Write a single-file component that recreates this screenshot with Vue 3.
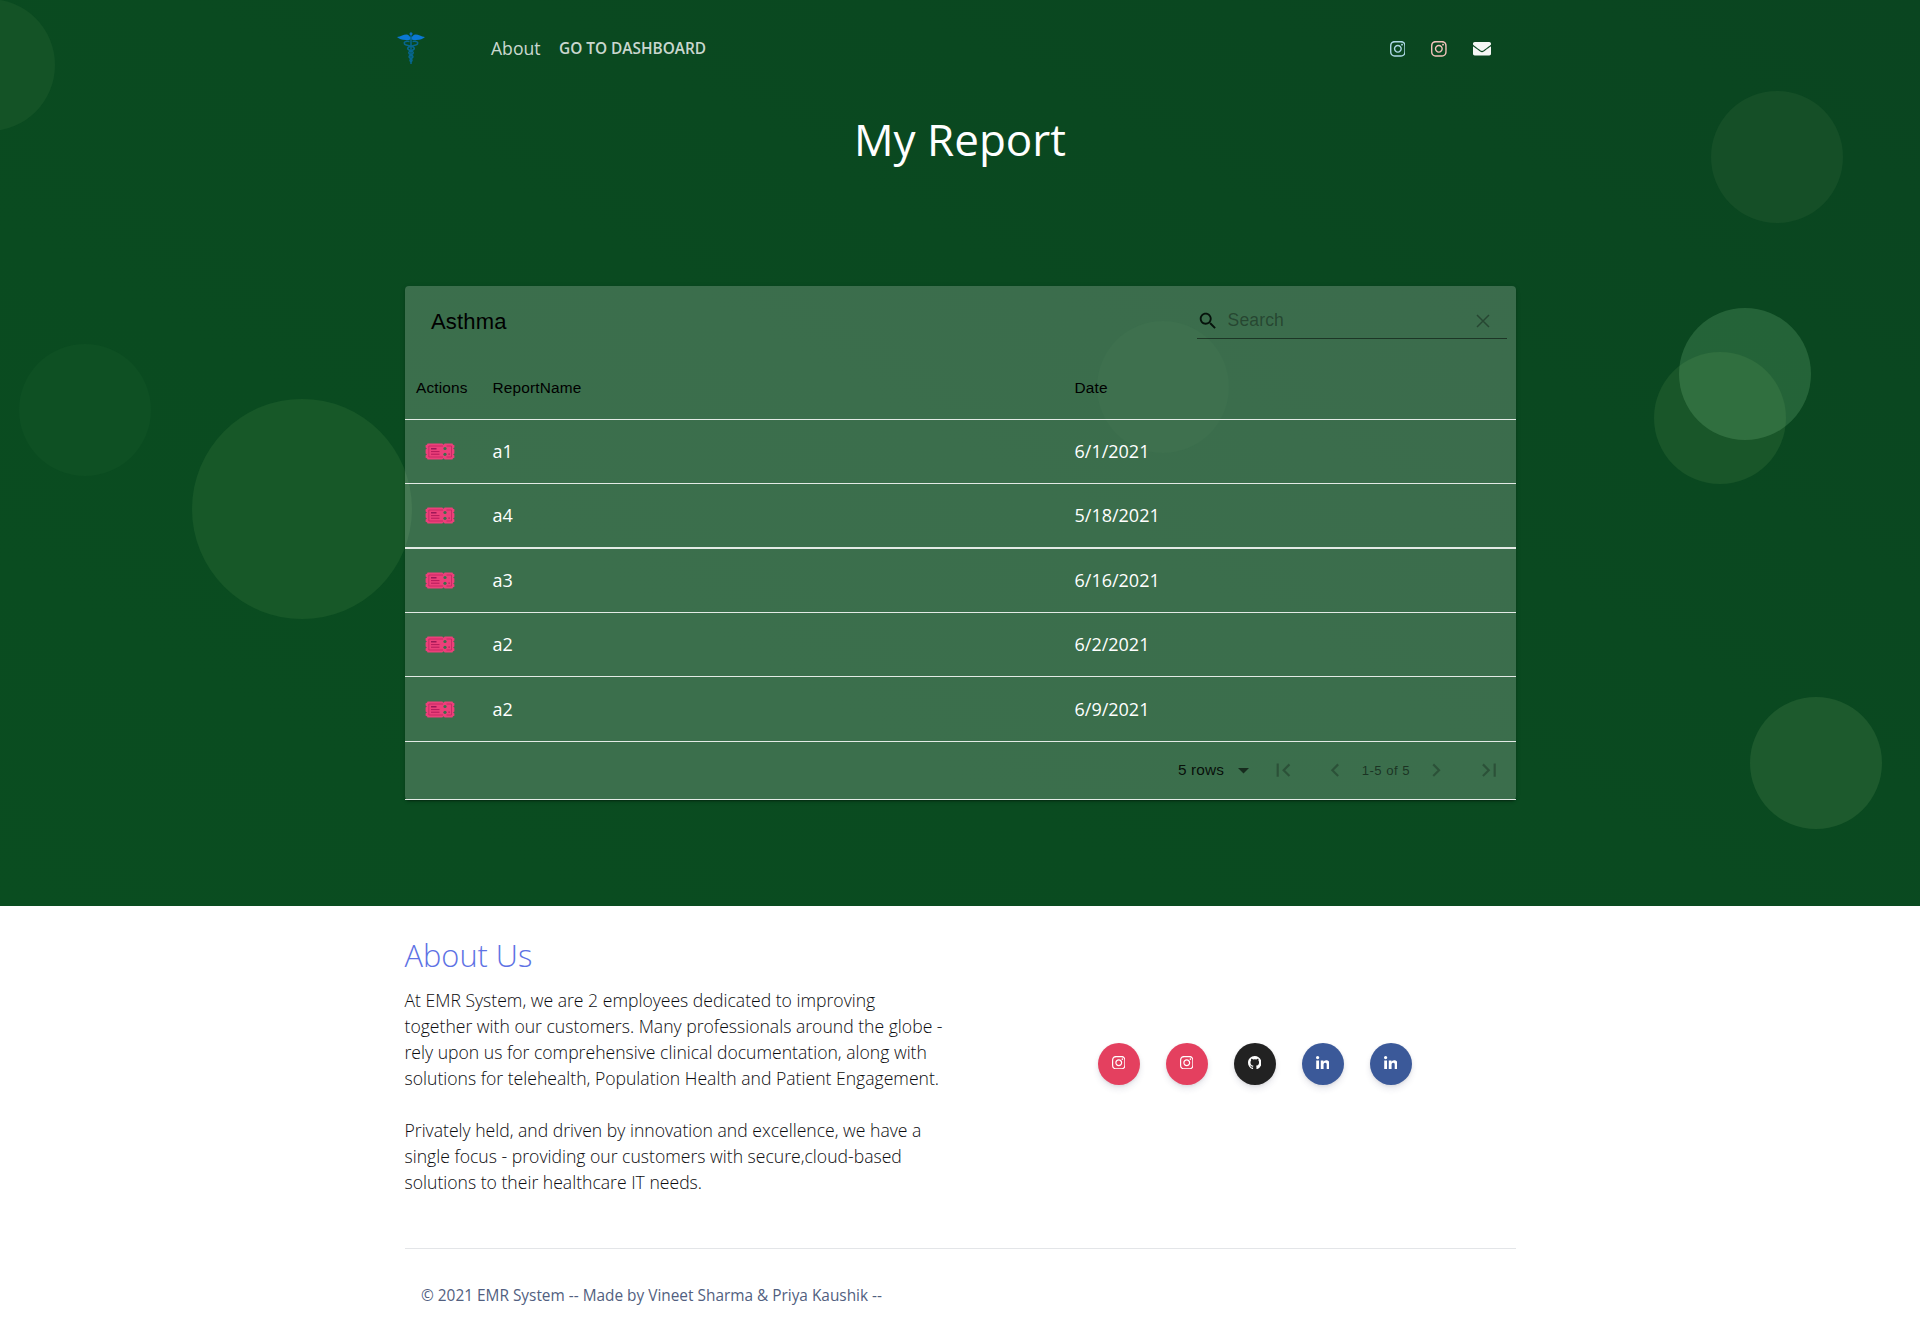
<script setup>
const paths = {
  instagram: 'M224.1 141c-63.6 0-114.9 51.3-114.9 114.9s51.3 114.9 114.9 114.9S339 319.5 339 255.900 287.700 141 224.100 141zm0 189.600c-41.100 0-74.700-33.500-74.700-74.700s33.500-74.700 74.700-74.700 74.700 33.500 74.700 74.700-33.600 74.700-74.700 74.700zm146.400-194.300c0 14.900-12 26.800-26.800 26.800-14.900 0-26.800-12-26.800-26.800s12-26.800 26.800-26.800 26.800 12 26.800 26.800zm76.100 27.200c-1.700-35.900-9.900-67.700-36.200-93.900-26.200-26.200-58-34.400-93.900-36.200-37-2.100-147.900-2.100-184.900 0-35.800 1.700-67.600 9.900-93.900 36.100s-34.400 58-36.200 93.900c-2.100 37-2.100 147.900 0 184.900 1.700 35.900 9.900 67.700 36.200 93.900s58 34.400 93.900 36.200c37 2.100 147.900 2.100 184.900 0 35.900-1.700 67.700-9.900 93.900-36.200 26.200-26.200 34.400-58 36.200-93.900 2.100-37 2.100-147.800 0-184.800zM398.800 388c-7.800 19.600-22.900 34.700-42.600 42.600-29.500 11.700-99.500 9-132.100 9s-102.700 2.600-132.100-9c-19.600-7.800-34.700-22.900-42.600-42.600-11.700-29.500-9-99.500-9-132.100s-2.600-102.700 9-132.100c7.800-19.600 22.900-34.700 42.600-42.600 29.500-11.700 99.500-9 132.100-9s102.700-2.600 132.100 9c19.600 7.800 34.700 22.900 42.600 42.600 11.700 29.500 9 99.500 9 132.100s2.700 102.700-9 132.100z',
  github: 'M8 0C3.580 0 0 3.580 0 8c0 3.540 2.290 6.530 5.470 7.590.4.07.55-.17.55-.38 0-.19-.01-.82-.01-1.490-2.010.37-2.530-.49-2.690-.94-.09-.23-.48-.94-.82-1.130-.28-.15-.68-.52-.01-.53.63-.01 1.080.58 1.230.82.72 1.210 1.870.87 2.330.66.07-.52.28-.87.51-1.070-1.780-.2-3.640-.89-3.640-3.950 0-.87.31-1.590.82-2.150-.08-.2-.36-1.020.08-2.120 0 0 .67-.21 2.200.82a7.600 7.600 0 0 1 4 0c1.530-1.040 2.200-.82 2.200-.82.44 1.100.16 1.920.08 2.120.51.56.82 1.270.82 2.150 0 3.070-1.870 3.750-3.650 3.950.29.25.54.73.54 1.480 0 1.070-.01 1.930-.01 2.200 0 .21.15.46.55.38A8.010 8.010 0 0 0 16 8c0-4.420-3.580-8-8-8z',
  linkedin: 'M100.280 448H7.400V148.900h92.880zM53.790 108.100C24.090 108.100 0 83.500 0 53.800a53.790 53.790 0 0 1 107.580 0c0 29.700-24.100 54.300-53.790 54.300zM447.900 448h-92.680V302.400c0-34.700-.7-79.200-48.290-79.200-48.290 0-55.690 37.700-55.690 76.700V448h-92.780V148.900h89.080v40.800h1.300c12.400-23.500 42.690-48.300 87.880-48.300 94 0 111.280 61.900 111.280 142.300V448z'
}
const bubbles = ['b1', 'b2', 'b3', 'b4', 'b5', 'b6', 'b7', 'b8']
const rows = [
  { name: 'a1', date: '6/1/2021' },
  { name: 'a4', date: '5/18/2021' },
  { name: 'a3', date: '6/16/2021' },
  { name: 'a2', date: '6/2/2021' },
  { name: 'a2', date: '6/9/2021' }
]
const socials = [
  { icon: 'instagram', box: '0 32 448 448', tone: 'insta' },
  { icon: 'instagram', box: '0 32 448 448', tone: 'insta' },
  { icon: 'github', box: '0 0 16 16', tone: 'git' },
  { icon: 'linkedin', box: '0 0 448 448', tone: 'linked' },
  { icon: 'linkedin', box: '0 0 448 448', tone: 'linked' }
]
</script>

<template>
  <div class="page">
    <section class="hero">
      <span v-for="b in bubbles" :key="b" class="bubble" :class="b"></span>
      <header class="nav">
        <svg class="logo" viewBox="0 0 28 33" fill="none">
          <path fill="#0b78d4" d="M0 5C4 4.600 7 2.400 9.500 2.600c2 .2 3 1.600 3.600 2.400h1.800c.6-.8 1.600-2.200 3.600-2.400C21 2.400 24 4.600 28 5c-2 2-5 3-8.500 3.100-2 .1-3.500-.1-5-.6h-1c-1.500.5-3 .7-5 .6C5 8 2 7 0 5z" />
          <circle cx="14" cy="1.700" r="1.500" fill="#0b6fc0" />
          <path stroke="#07668f" stroke-width="1.500" d="M14 3v29" />
          <path stroke="#07668f" stroke-width="1.500" d="M12.500 9.500C8 9 6.500 10 7.500 12c1.200 2 9.500 1.500 9.800 4.200.2 2.500-5.600 2.300-5.600 4.600 0 2 4.300 2 4.300 4 0 1.800-3 1.800-3 3.400 0 1 1 1.300 1 2M15.500 9.500C20 9 21.500 10 20.500 12c-1.200 2-9.500 1.500-9.800 4.200-.2 2.500 5.600 2.300 5.600 4.600 0 2-4.300 2-4.300 4 0 1.800 3 1.800 3 3.400 0 1-1 1.300-1 2" />
        </svg>
        <a class="about">About</a>
        <a class="dash">GO TO DASHBOARD</a>
        <span class="nav-icons">
          <svg class="ig blue" viewBox="0 32 448 448"><path :d="paths.instagram" /></svg>
          <svg class="ig pink" viewBox="0 32 448 448"><path :d="paths.instagram" /></svg>
          <svg class="mail" viewBox="0 64 512 384"><path d="M502.300 190.800c3.900-3.100 9.700-.2 9.700 4.700V400c0 26.500-21.500 48-48 48H48c-26.500 0-48-21.500-48-48V195.600c0-5 5.700-7.800 9.700-4.700 22.400 17.400 52.100 39.500 154.100 113.600 21.100 15.400 56.700 47.800 92.200 47.600 35.700.3 72-32.800 92.300-47.600 102-74.100 131.600-96.300 154-113.700zM256 320c23.200.4 56.600-29.200 73.400-41.400 132.700-96.300 142.800-104.700 173.400-128.700 5.800-4.500 9.200-11.500 9.200-18.900v-19c0-26.500-21.500-48-48-48H48c-26.500 0-48 21.500-48 48v19c0 7.400 3.400 14.300 9.200 18.900 30.600 23.900 40.700 32.400 173.400 128.700 16.800 12.200 50.200 41.800 73.400 41.400z" /></svg>
        </span>
      </header>
      <h1 class="title">My Report</h1>

      <div class="card">
        <div class="toolbar">
          <span class="name">Asthma</span>
          <div class="search">
            <svg class="mag" viewBox="0 0 24 24"><path d="M15.500 14h-.79l-.28-.27C15.410 12.590 16 11.110 16 9.500 16 5.910 13.090 3 9.500 3S3 5.910 3 9.500 5.910 16 9.500 16c1.610 0 3.090-.59 4.230-1.570l.27.28v.79l5 4.990L20.490 19l-4.990-5zm-6 0C7.010 14 5 11.990 5 9.500S7.010 5 9.500 5 14 7.010 14 9.500 11.990 14 9.500 14z" /></svg>
            <span class="ph">Search</span>
            <svg class="clear" viewBox="0 0 14 14"><path d="M1 1l12 12M13 1L1 13" /></svg>
          </div>
        </div>
        <div class="line head">
          <span class="c1">Actions</span><span class="c2">ReportName</span><span>Date</span>
        </div>
        <div v-for="(r, i) in rows" :key="i" class="line row" :class="'r' + i">
          <span class="c1">
            <svg class="ticket" viewBox="0 0 30 17">
              <path fill="#ec407a" d="M2.500.5H17.300l1.200 1.200L19.700.5h7.800c.3 1 .8 1.500 1.900 1.700V4.600l-1.300 1 1.300 1v3.800l-1.300 1 1.300 1v2.400c-1.100.200-1.600.700-1.900 1.700h-7.800l-1.200-1.200-1.200 1.200H2.500C2.200 15.500 1.700 15 .6 14.800v-2.400l1.300-1-1.300-1V6.600l1.300-1-1.300-1V2.200C1.700 2 2.200 1.500 2.500.5z" />
              <path fill="none" stroke="#c2255f" stroke-width=".8" d="M18 3H3.800v11H18M21.500 3h5v11h-5" />
              <path stroke="#880e4f" stroke-width="1.200" d="M6 5.800h5.500" />
              <path stroke="#ad1457" stroke-width=".9" d="M6 8.600h8.500M6 11.200h8.500" />
              <path stroke="#ad1457" stroke-width="1.200" d="M23.500 11.200h1.200" />
              <circle cx="20" cy="5.500" r="1.600" fill="#3d6e4d" /><circle cx="20" cy="11.300" r="1.600" fill="#3d6e4d" />
            </svg>
          </span>
          <span class="c2 cell">{{ r.name }}</span><span class="cell">{{ r.date }}</span>
        </div>
        <div class="pager">
          <span class="count">5 rows</span>
          <svg class="caret" viewBox="0 0 10 5"><path d="M0 0h10L5 5z" /></svg>
          <svg class="pg first" viewBox="0 0 24 24"><path d="M18.410 16.590L13.820 12l4.590-4.590L17 6l-6 6 6 6zM6 6h2v12H6z" /></svg>
          <svg class="pg prev" viewBox="0 0 24 24"><path d="M15.410 7.410L14 6l-6 6 6 6 1.410-1.410L10.830 12z" /></svg>
          <span class="range">1-5 of 5</span>
          <svg class="pg next" viewBox="0 0 24 24"><path d="M10 6L8.590 7.410 13.170 12l-4.580 4.590L10 18l6-6z" /></svg>
          <svg class="pg last" viewBox="0 0 24 24"><path d="M5.590 7.410L10.180 12l-4.590 4.590L7 18l6-6-6-6zM16 6h2v12h-2z" /></svg>
        </div>
      </div>
    </section>

    <footer class="footer">
      <div class="cols">
        <div class="text">
          <h3>About Us</h3>
          <p>At EMR System, we are 2 employees dedicated to improving<br>together with our customers. Many professionals around the globe -<br>rely upon us for comprehensive clinical documentation, along with<br>solutions for telehealth, Population Health and Patient Engagement.</p>
          <p>Privately held, and driven by innovation and excellence, we have a<br>single focus - providing our customers with secure,cloud-based<br>solutions to their healthcare IT needs.</p>
        </div>
        <div class="socials">
          <a v-for="(s, i) in socials" :key="i" class="btn" :class="s.tone">
            <svg :viewBox="s.box"><path :d="paths[s.icon]" /></svg>
          </a>
        </div>
      </div>
      <div class="copy">© 2021 EMR System -- Made by Vineet Sharma &amp; Priya Kaushik --</div>
    </footer>
  </div>
</template>

<style>
body { margin: 0; background: #fff; }
</style>

<style scoped>
.page { font-family: "Open Sans", sans-serif; font-size: 17.6px; height: 1333px; overflow: hidden; }
.hero {
  position: relative; isolation: isolate; height: 906px; overflow: hidden;
  background: linear-gradient(30deg, #0a4d20 0%, #0a4a20 50%, #0a4520 100%);
}
.bubble { position: absolute; z-index: -1; width: 132px; height: 132px; border-radius: 50%; }
.b1 { left: -77px; top: -1px; background: #145326; }
.b2 { left: 19px; top: 344px; background: #0e5023; }
.b3 { left: 192px; top: 399px; width: 220px; height: 220px; background: #175828; }
.b4 { left: 1711px; top: 91px; background: #154f27; }
.b5 { left: 1654px; top: 352px; background: #195629; }
.b6 { left: 1679px; top: 308px; background: rgba(130, 200, 140, .22); }
.b7 { left: 1750px; top: 697px; background: #1d5a2d; }
.b8 { left: 1097px; top: 321px; background: #0e4d22; }
.nav { display: flex; align-items: center; height: 96px; margin: 0 390px 0 397px; color: #fff; }
.logo { width: 28px; height: 33px; margin-right: 66px; }
.about { font-size: 17.6px; color: rgba(255, 255, 255, .8); width: 68px; }
.dash { font-size: 15.4px; font-weight: 600; color: rgba(255, 255, 255, .8); }
.nav-icons { display: flex; align-items: center; margin: 2px 39.5px 0 auto; }
.ig { width: 15.7px; height: 15.7px; margin-right: 25.8px; }
.blue { fill: #add8e6; }
.pink { fill: #f3c3bb; }
.mail { width: 18px; height: 13.5px; fill: #f5f7f5; }
.title { margin: 10px 0 0; text-align: center; font-size: 44px; line-height: 66px; font-weight: 400; color: #fff; }
.card {
  width: 1111px; margin: 114px 0 0 405px; height: 514px; border-radius: 4px;
  background: rgba(255, 255, 255, .2); font-family: "Liberation Sans", sans-serif; color: rgba(0, 0, 0, .87);
  box-shadow: 0 3px 1px -2px rgba(0, 0, 0, .2), 0 2px 2px 0 rgba(0, 0, 0, .14), 0 1px 5px 0 rgba(0, 0, 0, .12);
}
.toolbar { display: flex; justify-content: space-between; height: 70px; }
.name { margin-left: 26px; line-height: 71px; font-size: 22px; letter-spacing: .0075em; color: #000; }
.search {
  display: flex; align-items: center; box-sizing: border-box; width: 310px; height: 35px;
  margin: 18px 9px 0 0; border-bottom: 1px solid rgba(0, 0, 0, .5);
}
.mag { width: 22px; height: 22px; margin: 0 0 0 -.4px; fill: #06120b; }
.ph { margin: 0 0 2px 9px; font-size: 17.6px; letter-spacing: .1px; color: rgba(0, 0, 0, .36); }
.clear { width: 14px; height: 14px; margin: 0 17.5px 0 auto; fill: none; stroke: rgba(0, 0, 0, .34); stroke-width: 1.5; }
.line { display: flex; align-items: center; box-sizing: border-box; height: 64px; border-bottom: 1px solid rgba(255, 255, 255, .86); }
.line .c1 { display: flex; box-sizing: border-box; width: 87.5px; padding-left: 11px; }
.line .c2 { width: 582px; }
.head { font-size: 15.4px; letter-spacing: .01071em; color: #000; }
.row { font-family: "Open Sans", sans-serif; font-size: 18px; color: #fff; }
.cell { padding-bottom: 2px; }
.r4 .cell { padding-bottom: 1px; }
.r1 { height: 65px; border-bottom-width: 2px; }
.r4 { height: 65px; }
.ticket { width: 30px; height: 17px; margin-left: 9px; }
.pager { display: flex; align-items: center; box-sizing: border-box; height: 58px; padding-bottom: 1px; border-bottom: 1px solid rgba(255, 255, 255, .86); }
.count { margin-left: 773px; width: 60px; font-size: 15.4px; letter-spacing: .1px; }
.caret { width: 11px; height: 5.5px; fill: rgba(0, 0, 0, .6); margin-top: 2px; }
.pg { width: 26.4px; height: 26.4px; fill: rgba(0, 0, 0, .26); }
.first { margin-left: 21.2px; }
.prev { margin-left: 25.8px; }
.range { margin-left: 13px; width: 61.7px; font-size: 13.2px; letter-spacing: .03333em; color: rgba(0, 0, 0, .54); }
.last { margin-left: 26.4px; }
.footer { margin: 0 404px 0 405px; }
.cols { display: flex; height: 342px; border-bottom: 1px solid #e3e5e8; }
.text { width: 693px; padding-top: 26px; }
.text h3, .text p { margin-left: -.5px; }
h3 { margin: 0 0 9px; font-size: 30.8px; line-height: 46px; font-weight: 300; color: #5e72e4; }
p { margin: 0 0 26px; font-size: 17.6px; line-height: 26px; font-weight: 300; color: #0c0c0f; white-space: nowrap; }
.socials { display: flex; gap: 26px; padding-top: 137px; }
.btn {
  display: flex; align-items: center; justify-content: center; box-sizing: border-box; width: 42px; height: 42px;
  padding: 0 1px 3px 0; border-radius: 50%; box-shadow: 0 4px 6px rgba(50, 50, 93, .11), 0 1px 3px rgba(0, 0, 0, .08);
}
.btn svg { width: 13.5px; height: 13.5px; fill: #fff; }
.insta { background: #e4405f; }
.git { background: #222; }
.linked { background: #3b5999; }
.copy { margin: 34px 0 0 16px; font-size: 15.4px; line-height: 26px; color: #525f7f; }
</style>
